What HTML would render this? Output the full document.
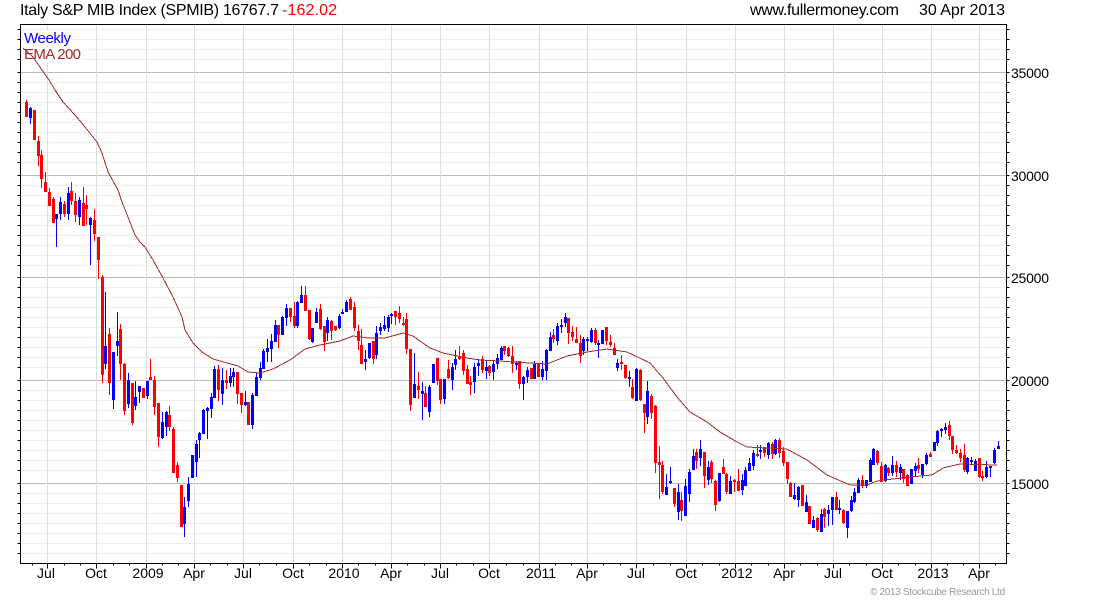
<!DOCTYPE html>
<html><head><meta charset="utf-8"><title>Italy S&amp;P MIB Index</title>
<style>html,body{margin:0;padding:0;background:#fff}svg{display:block}text{font-family:"Liberation Sans",Arial,sans-serif}</style></head>
<body>
<svg xmlns="http://www.w3.org/2000/svg" width="1100" height="600" viewBox="0 0 1100 600">
<g transform="translate(.5 .5)" shape-rendering="crispEdges" fill="none">
<path stroke="#eee" d="M20 29H1006M20 39H1006M20 49H1006M20 59H1006M20 82H1006M20 92H1006M20 102H1006M20 112H1006M20 122H1006M20 132H1006M20 142H1006M20 152H1006M20 162H1006M20 185H1006M20 195H1006M20 205H1006M20 215H1006M20 225H1006M20 235H1006M20 245H1006M20 255H1006M20 265H1006M20 287H1006M20 297H1006M20 307H1006M20 317H1006M20 327H1006M20 337H1006M20 347H1006M20 357H1006M20 367H1006M20 390H1006M20 400H1006M20 410H1006M20 420H1006M20 430H1006M20 440H1006M20 450H1006M20 460H1006M20 470H1006M20 493H1006M20 503H1006M20 513H1006M20 523H1006M20 533H1006M20 543H1006M20 553H1006"/>
<path stroke="#bbb" d="M20 72H1006M20 175H1006M20 277H1006M20 380H1006M20 483H1006"/>
<path stroke="#ddd" d="M47 24V563M96 24V563M146 24V563M194 24V563M243 24V563M293 24V563M342 24V563M391 24V563M440 24V563M489 24V563M539 24V563M587 24V563M636 24V563M686 24V563M735 24V563M784 24V563M833 24V563M882 24V563M931 24V563M979 24V563"/>
<path stroke="#000" d="M20 24H1006V563H20Z"/>
<path stroke="#000" d="M17 29H20M17 39H20M17 49H20M17 59H20M17 72H20M17 82H20M17 92H20M17 102H20M17 112H20M17 122H20M17 132H20M17 142H20M17 152H20M17 162H20M17 175H20M17 185H20M17 195H20M17 205H20M17 215H20M17 225H20M17 235H20M17 245H20M17 255H20M17 265H20M17 277H20M17 287H20M17 297H20M17 307H20M17 317H20M17 327H20M17 337H20M17 347H20M17 357H20M17 367H20M17 380H20M17 390H20M17 400H20M17 410H20M17 420H20M17 430H20M17 440H20M17 450H20M17 460H20M17 470H20M17 483H20M17 493H20M17 503H20M17 513H20M17 523H20M17 533H20M17 543H20M17 553H20"/>
<path stroke="#000" d="M1006 29H1009M1006 39H1009M1006 49H1009M1006 59H1009M1006 72H1009M1006 82H1009M1006 92H1009M1006 102H1009M1006 112H1009M1006 122H1009M1006 132H1009M1006 142H1009M1006 152H1009M1006 162H1009M1006 175H1009M1006 185H1009M1006 195H1009M1006 205H1009M1006 215H1009M1006 225H1009M1006 235H1009M1006 245H1009M1006 255H1009M1006 265H1009M1006 277H1009M1006 287H1009M1006 297H1009M1006 307H1009M1006 317H1009M1006 327H1009M1006 337H1009M1006 347H1009M1006 357H1009M1006 367H1009M1006 380H1009M1006 390H1009M1006 400H1009M1006 410H1009M1006 420H1009M1006 430H1009M1006 440H1009M1006 450H1009M1006 460H1009M1006 470H1009M1006 483H1009M1006 493H1009M1006 503H1009M1006 513H1009M1006 523H1009M1006 533H1009M1006 543H1009M1006 553H1009"/>
<path stroke="#000" d="M47 563V568M96 563V568M146 563V568M194 563V568M243 563V568M293 563V568M342 563V568M391 563V568M440 563V568M489 563V568M539 563V568M587 563V568M636 563V568M686 563V568M735 563V568M784 563V568M833 563V568M882 563V568M931 563V568M979 563V568M32 563V565M64 563V565M80 563V565M113 563V565M129 563V565M162 563V565M178 563V565M210 563V565M227 563V565M259 563V565M276 563V565M309 563V565M326 563V565M358 563V565M375 563V565M407 563V565M424 563V565M456 563V565M473 563V565M506 563V565M523 563V565M555 563V565M571 563V565M603 563V565M620 563V565M653 563V565M670 563V565M702 563V565M719 563V565M751 563V565M768 563V565M800 563V565M817 563V565M849 563V565M866 563V565M898 563V565M915 563V565M947 563V565M963 563V565M995 563V565"/>
</g>
<rect x="23" y="30" width="48" height="15" fill="#fff"/>
<rect x="23" y="47" width="59" height="15" fill="#fff"/>
<g transform="translate(.5 0)" fill="none" shape-rendering="crispEdges">
<path stroke="#f00" d="M26 100V117M34 110V140M38 136V166M41 150V188M45 172V192M49 188V206M53 197V223M64 201V217M71 182V205M75 193V222M83 187V226M86 195V225M94 209V241M98 237V279M102 275V383M109 328V395M120 324V380M124 363V415M132 383V425M143 388V398M150 359V380M154 376V415M158 403V447M169 406V431M173 427V473M177 462V482M181 485V527M218 365V401M226 370V389M237 372V404M241 393V413M248 402V425M278 325V348M290 308V322M294 302V328M305 286V311M309 310V340M320 304V330M324 326V351M331 320V340M335 326V331M350 297V310M354 302V331M358 325V350M361 329V364M373 341V364M395 311V325M399 306V323M403 317V326M406 313V354M410 349V411M418 372V399M425 386V407M437 358V385M440 379V404M448 360V379M459 346V360M463 350V375M467 365V384M470 376V395M482 356V373M489 365V376M504 346V355M508 347V357M512 346V373M519 361V389M531 368V379M538 363V377M553 329V343M568 318V344M572 326V341M576 327V343M580 335V363M595 328V345M606 327V345M610 335V347M614 343V355M621 355V370M625 365V379M632 379V399M640 369V401M644 404V433M651 394V419M655 405V473M659 446V499M662 461V494M674 488V507M681 492V521M696 449V469M704 452V488M711 460V483M715 480V511M723 459V474M726 473V494M734 479V492M738 469V491M757 445V457M764 447V457M772 442V459M779 438V458M783 447V466M787 462V484M790 482V497M802 485V506M809 506V524M817 517V532M824 508V528M836 492V510M843 509V524M862 475V488M877 450V465M881 462V482M888 467V476M896 461V477M903 469V483M907 474V486M918 458V473M930 452V457M949 421V440M952 436V454M956 445V454M960 449V462M964 444V472M979 458V478M982 471V481"/>
<path stroke="#f00" stroke-width="3" d="M26 102V117M34 110V140M38 141V156M41 155V179M45 182V192M49 192V206M53 199V223M64 204V214M71 191V201M75 201V215M83 203V226M86 205V209M94 220V234M98 237V260M102 277V375M109 334V383M120 329V364M124 364V411M132 383V423M143 388V398M150 377V380M154 380V407M158 403V437M169 415V427M173 429V473M177 465V478M181 485V527M218 369V390M226 380V383M237 372V394M241 393V405M248 402V425M278 325V335M290 308V317M294 316V326M305 295V311M309 310V339M320 309V329M324 326V342M331 321V331M335 326V330M350 299V310M354 307V328M358 331V341M361 345V364M373 341V359M395 311V317M399 313V319M403 323V325M406 319V349M410 349V405M418 386V390M425 393V407M437 358V381M440 379V400M448 369V378M459 357V359M463 353V371M467 369V384M470 382V385M482 359V370M489 366V373M504 346V351M508 348V356M512 356V364M519 361V384M531 368V379M538 363V377M553 335V339M568 318V333M572 332V337M576 339V343M580 343V356M595 330V343M606 327V341M610 342V345M614 348V355M621 362V364M625 365V378M632 387V398M640 370V400M644 404V413M651 396V413M655 406V463M659 462V465M662 465V492M674 488V504M681 500V511M696 452V461M704 452V476M711 462V479M715 481V505M723 467V474M726 474V492M734 480V482M738 481V491M757 454V456M764 447V453M772 444V454M779 440V453M783 451V463M787 462V479M790 483V497M802 485V506M809 506V524M817 518V530M824 509V517M836 497V510M843 510V523M862 480V486M877 451V463M881 466V482M888 468V473M896 465V472M903 469V479M907 475V486M918 465V469M930 454V457M949 425V436M952 436V450M956 450V453M960 453V458M964 455V470M979 458V477M982 476V478"/>
<path stroke="#00f" d="M30 107V124M56 214V247M60 197V220M68 187V220M79 197V225M90 217V265M105 292V369M113 352V409M117 312V356M128 373V408M135 381V410M139 386V403M147 381V399M162 412V439M166 411V436M184 497V537M188 477V507M192 455V478M196 440V477M199 432V458M203 409V434M207 407V439M211 393V418M214 366V398M222 368V405M230 368V387M233 368V387M245 391V406M252 393V429M256 372V396M260 362V380M263 349V369M267 339V362M271 334V362M275 320V342M282 316V335M286 304V326M297 301V328M301 286V303M312 328V343M316 308V323M327 317V341M339 314V329M342 309V314M346 300V312M365 350V370M369 343V359M376 326V359M380 323V335M384 316V331M388 315V332M391 313V324M414 353V398M422 382V420M429 385V417M433 364V383M444 379V404M452 363V390M455 350V370M474 363V393M478 359V376M486 361V379M493 361V380M497 354V369M501 346V360M516 361V370M523 376V400M527 367V383M534 361V379M542 361V380M546 349V380M550 332V351M557 323V345M561 319V333M565 313V327M583 337V355M587 337V351M591 328V343M598 340V358M602 330V344M617 359V371M629 371V387M636 368V401M647 381V424M666 474V495M670 467V484M678 484V520M685 479V516M689 469V502M693 449V470M700 440V466M708 461V485M719 473V502M730 476V494M742 474V495M745 467V486M749 458V471M753 450V470M760 445V459M768 442V459M775 439V455M794 483V500M798 486V507M806 495V512M813 516V528M821 509V532M828 505V526M832 497V525M839 500V514M847 511V538M851 496V512M854 488V503M858 478V493M866 480V488M870 458V482M873 448V465M885 464V482M892 456V476M900 464V480M911 469V484M915 463V477M922 464V478M926 453V465M934 442V451M937 430V446M941 428V437M945 423V434M967 457V474M971 457V465M975 459V471M986 461V478M990 466V477M994 448V464M998 441V449"/>
<path stroke="#00f" stroke-width="3" d="M30 108V118M56 214V219M60 202V214M68 193V214M79 200V217M90 218V225M105 346V364M113 352V400M117 341V346M128 380V404M135 397V406M139 386V392M147 381V396M162 422V438M166 412V427M184 507V524M188 484V501M192 455V478M196 444V462M199 433V440M203 410V434M207 408V411M211 397V409M214 369V398M222 380V394M230 376V383M233 372V377M245 402V405M252 395V425M256 377V396M260 368V378M263 351V369M267 348V352M271 341V349M275 325V342M282 317V335M286 308V318M297 302V326M301 295V303M312 328V342M316 312V323M327 320V333M339 316V328M342 312V314M346 302V312M365 359V362M369 343V358M376 333V355M380 327V331M384 325V329M388 317V328M391 314V316M414 384V398M422 391V394M429 387V412M433 364V383M444 379V399M452 367V380M455 359V365M474 367V382M478 363V366M486 367V371M493 364V372M497 358V364M501 348V360M516 363V365M523 377V384M527 370V377M534 364V379M542 369V377M546 350V371M550 337V351M557 326V341M561 325V327M565 317V323M583 339V351M587 339V341M591 330V342M598 343V345M602 330V344M617 363V368M629 377V379M636 369V401M647 391V417M666 487V495M670 481V483M678 492V512M685 486V516M689 472V494M693 456V470M700 449V458M708 467V480M719 473V501M730 481V494M742 480V490M745 470V486M749 463V471M753 453V466M760 450V452M768 443V455M775 440V454M794 495V499M798 487V500M806 502V512M813 520V528M821 514V532M828 510V514M832 497V510M839 508V510M847 511V528M851 500V511M854 492V502M858 480V493M866 480V486M870 460V482M873 449V465M885 465V481M892 465V473M900 467V473M911 469V484M915 466V471M922 464V475M926 455V464M934 442V451M937 431V443M941 429V431M945 427V430M967 458V472M971 460V462M975 461V471M986 467V477M990 466V468M994 450V463M998 446V449"/>
</g>
<polyline fill="none" stroke="#a52a2a" stroke-width="1" shape-rendering="crispEdges" points="23,48 33,57 42,70 49,80 55,90 63,102 75,115 85,127 97,142 102,153 108,172 118,190 122,202 128,217 135,235 140,242 145,247 153,260 163,278 173,297 182,317 185,330 193,343 202,352 213,359 227,363 238,366 248,372 260,373 273,369 290,360 305,349 320,345 340,341 353,336 368,338 385,338 403,333 413,336 430,348 443,353 467,358 480,360 500,361 513,362 547,364 567,356 587,352 607,349 627,352 650,363 663,378 677,397 690,412 707,422 720,432 737,442 747,447 787,449 807,460 827,475 843,482 850,485 867,485 877,481 893,479 910,477 932,475 943,468 960,464 997,465"/>
<g font-size="16" fill="#000">
<text x="20" y="15" textLength="259" lengthAdjust="spacing">Italy S&amp;P MIB Index (SPMIB) 16767.7</text>
<text x="282" y="15" textLength="55" lengthAdjust="spacing" fill="#f00">-162.02</text>
<text x="750" y="15" textLength="149" lengthAdjust="spacing">www.fullermoney.com</text>
<text x="919" y="15" textLength="86" lengthAdjust="spacing">30 Apr 2013</text>
</g>
<text x="24" y="43" font-size="15" fill="#00f" textLength="47" lengthAdjust="spacing">Weekly</text>
<text x="24" y="59" font-size="15" fill="#a52a2a" textLength="57" lengthAdjust="spacing">EMA 200</text>
<g font-size="14" fill="#000">
<text x="1011" y="78" textLength="38" lengthAdjust="spacing">35000</text>
<text x="1011" y="181" textLength="38" lengthAdjust="spacing">30000</text>
<text x="1011" y="283" textLength="38" lengthAdjust="spacing">25000</text>
<text x="1011" y="386" textLength="38" lengthAdjust="spacing">20000</text>
<text x="1011" y="489" textLength="38" lengthAdjust="spacing">15000</text>
</g>
<g font-size="14" fill="#000" text-anchor="middle">
<text x="46" y="578">Jul</text><text x="96" y="578">Oct</text><text x="148" y="578">2009</text><text x="194" y="578">Apr</text><text x="243" y="578">Jul</text><text x="293" y="578">Oct</text><text x="344" y="578">2010</text><text x="391" y="578">Apr</text><text x="440" y="578">Jul</text><text x="489" y="578">Oct</text><text x="541" y="578">2011</text><text x="587" y="578">Apr</text><text x="636" y="578">Jul</text><text x="686" y="578">Oct</text><text x="737" y="578">2012</text><text x="784" y="578">Apr</text><text x="833" y="578">Jul</text><text x="882" y="578">Oct</text><text x="933" y="578">2013</text><text x="979" y="578">Apr</text>
</g>
<text x="870" y="595" font-size="10" fill="#999" textLength="135" lengthAdjust="spacing">© 2013 Stockcube Research Ltd</text>
</svg>
</body></html>
